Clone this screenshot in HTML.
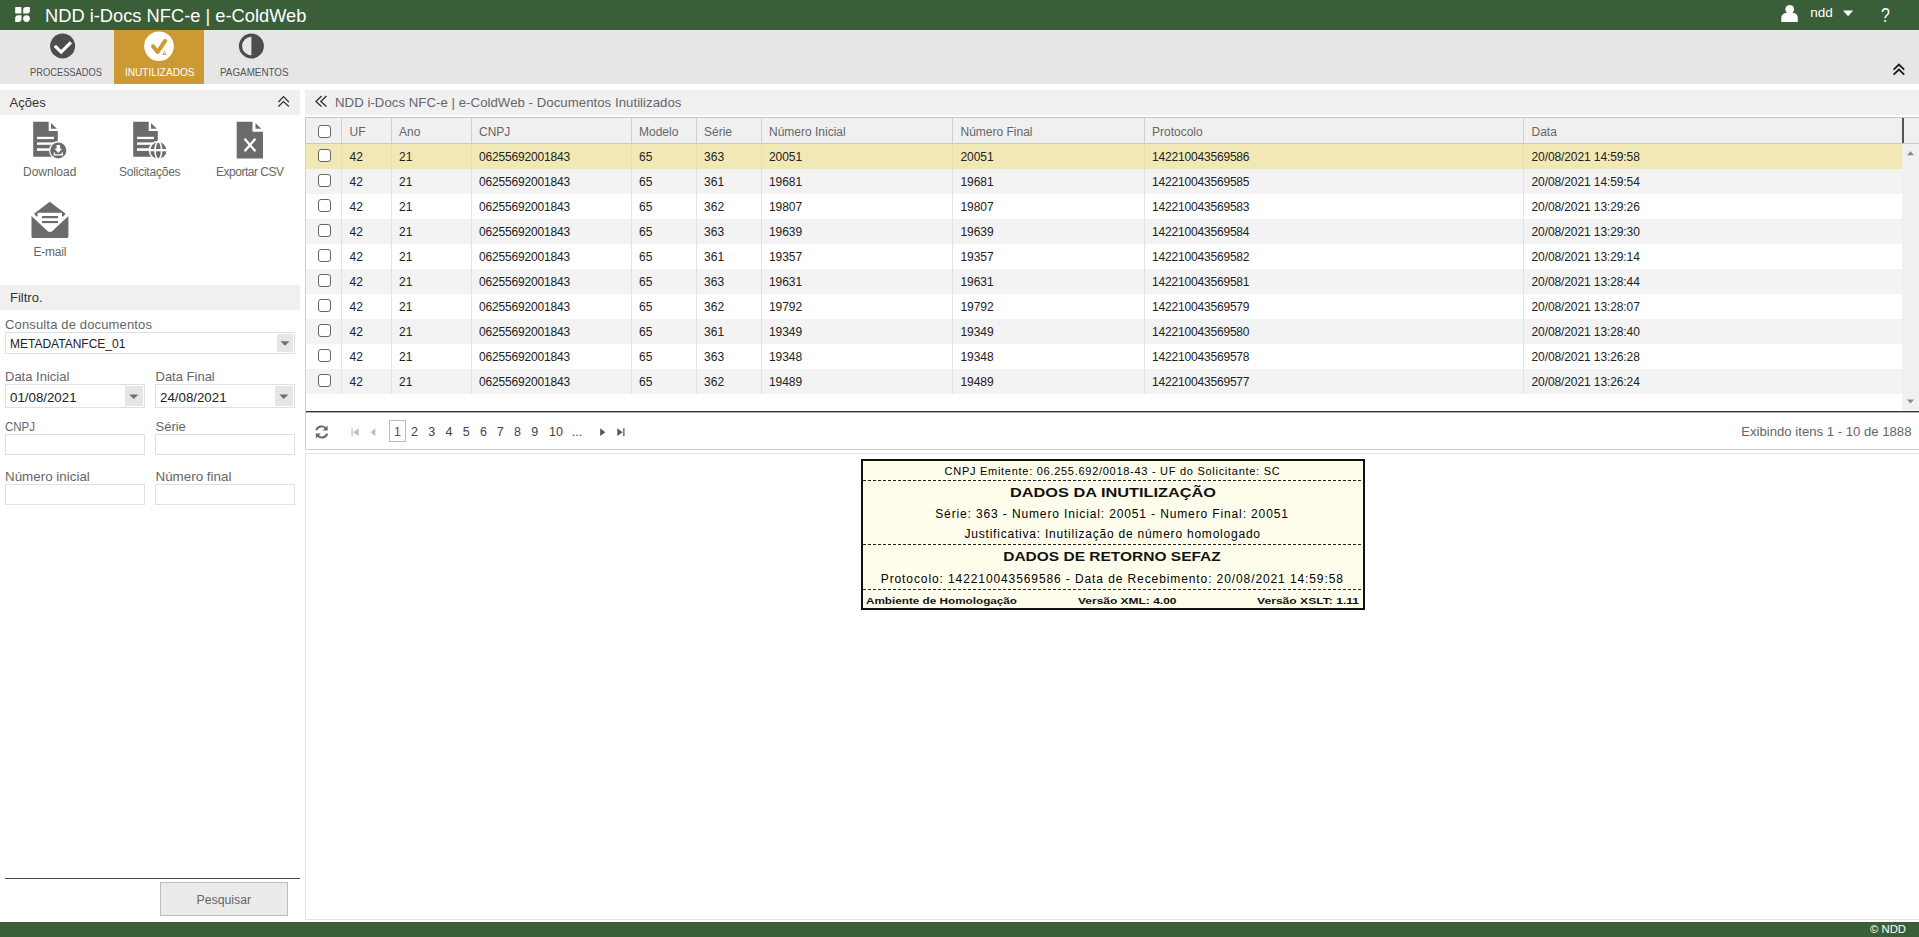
<!DOCTYPE html>
<html><head><meta charset="utf-8"><title>NDD i-Docs NFC-e | e-ColdWeb</title>
<style>
*{box-sizing:border-box;margin:0;padding:0}
html,body{width:1919px;height:937px;overflow:hidden;background:#fff;font-family:"Liberation Sans",sans-serif;color:#333}
.a{position:absolute}
.t{white-space:nowrap}
</style></head><body>
<div class="a" style="left:0px;top:0px;width:1919px;height:30px;background:#3a5e38"></div>
<svg class="a" style="left:14px;top:6px" width="18" height="18" viewBox="0 0 18 18"><g fill="#fff"><rect x="1.2" y="1" width="6.2" height="6.6" rx="0.6"/><path d="M9.2 7.6V3.6C9.2 2.2 10.4 1 11.8 1H15.9V5C15.9 6.4 14.7 7.6 13.3 7.6Z"/><path d="M1.2 15.9V12C1.2 10.5 2.4 9.3 3.9 9.3H7.5V13.3C7.5 14.7 6.3 15.9 4.9 15.9Z"/><circle cx="12.5" cy="12.6" r="3.4"/></g></svg>
<div class="a t" style="left:45.00px;top:6.51px;font-size:18.3px;line-height:18.3px;color:#fff;">NDD i-Docs NFC-e | e-ColdWeb</div>
<svg class="a" style="left:1780px;top:3px" width="20" height="20" viewBox="0 0 20 20"><g fill="#fff"><circle cx="9.7" cy="6.3" r="4.35"/><path d="M1.3 18.9V15.2C1.3 12.4 3.3 10.1 6 10.1H13.4C16.1 10.1 17.8 12.4 17.8 15.2V18.9Z"/></g></svg>
<div class="a t" style="left:1810.30px;top:5.57px;font-size:13.5px;line-height:13.5px;color:#fff;">ndd</div>
<svg class="a" style="left:1842px;top:10px" width="12" height="7" viewBox="0 0 12 7"><path d="M1 0.6H11.2L6.1 6.3Z" fill="#fff"/></svg>
<div class="a t" style="left:1880.70px;top:4.12px;font-size:21px;line-height:21px;color:#fff;transform:scaleX(0.7529);transform-origin:left;">?</div>
<div class="a" style="left:0px;top:30px;width:1919px;height:54px;background:#e6e6e6"></div>
<div class="a" style="left:114px;top:30px;width:90px;height:54px;background:#cc9933"></div>
<svg class="a" style="left:48px;top:31px" width="30" height="30" viewBox="0 0 30 30"><circle cx="14.6" cy="15" r="12.5" fill="#4d4d4d"/><path d="M6.8 14.8L13.2 21.1L22.9 11.4" fill="none" stroke="#fff" stroke-width="3.2"/></svg>
<div class="a t" style="left:29.60px;top:66.87px;font-size:11.5px;line-height:11.5px;color:#555;transform:scaleX(0.8106);transform-origin:left;">PROCESSADOS</div>
<svg class="a" style="left:142px;top:29px" width="34" height="34" viewBox="0 0 34 34"><circle cx="17" cy="17.2" r="14.8" fill="#fff"/><path d="M11 17.3L15.6 23L23.2 11.9" fill="none" stroke="#cc9933" stroke-width="4" stroke-linecap="round" stroke-linejoin="round"/><path d="M19.4 26.6L22.5 20.6L25.6 26.6Z" fill="#fff"/><path d="M20.3 26L22.5 21.8L24.7 26Z" fill="#cc9933"/><rect x="22.1" y="23" width="0.8" height="1.7" fill="#fff"/><rect x="22.1" y="25" width="0.8" height="0.6" fill="#fff"/></svg>
<div class="a t" style="left:124.60px;top:66.87px;font-size:11.5px;line-height:11.5px;color:#fff;transform:scaleX(0.8771);transform-origin:left;">INUTILIZADOS</div>
<svg class="a" style="left:237px;top:31px" width="30" height="30" viewBox="0 0 30 30"><circle cx="14.4" cy="15" r="10.9" fill="none" stroke="#4d4d4d" stroke-width="3.2"/><path d="M14.4 4.1A10.9 10.9 0 0 1 14.4 25.9Z" fill="#4d4d4d"/></svg>
<div class="a t" style="left:219.70px;top:66.87px;font-size:11.5px;line-height:11.5px;color:#555;transform:scaleX(0.8565);transform-origin:left;">PAGAMENTOS</div>
<svg class="a" style="left:1890px;top:60px" width="18" height="18" viewBox="0 0 18 18"><g fill="none" stroke="#1a1a1a" stroke-width="1.8"><path d="M3.6 9.6L8.9 4.6L14.2 9.6"/><path d="M3.6 14.6L8.9 9.6L14.2 14.6"/></g></svg>
<div class="a" style="left:0px;top:90px;width:300px;height:25px;background:#f0f0f0"></div>
<div class="a t" style="left:9.50px;top:96.00px;font-size:13px;line-height:13px;color:#333;">Ações</div>
<svg class="a" style="left:272px;top:92px" width="24" height="20" viewBox="0 0 24 20"><g fill="none" stroke="#333" stroke-width="1.35"><path d="M6.4 10L11.5 4.6L16.9 10"/><path d="M6.4 14.6L11.5 9.6L16.9 14.6"/></g></svg>
<svg class="a" style="left:28px;top:118px" width="44" height="44" viewBox="0 0 44 44"><path d="M5.2 3.8H20.7V13H29.8V38.7H5.2Z" fill="#6b6b6b"/><path d="M23 4.9L28.9 10.8H23Z" fill="#6b6b6b"/><g fill="#fff"><rect x="9" y="18.8" width="17" height="2.3"/><rect x="9" y="24.4" width="17" height="2.4"/><rect x="9" y="30.3" width="17" height="2.6"/></g><circle cx="30.3" cy="32.4" r="9.3" fill="#fff"/><circle cx="30.3" cy="32.4" r="8" fill="#6b6b6b"/><path d="M28.5 27H32.1V30.8H34.1L30.3 34.9L26.5 30.8H28.5Z" fill="#fff"/><path d="M26.4 34.4V36.9H34.3V34.4" fill="none" stroke="#fff" stroke-width="1.4"/></svg>
<div class="a t" style="left:23.00px;top:166.04px;font-size:12px;line-height:12px;color:#666;">Download</div>
<svg class="a" style="left:128px;top:118px" width="44" height="44" viewBox="0 0 44 44"><path d="M5.2 3.8H20.7V13H29.8V38.7H5.2Z" fill="#6b6b6b"/><path d="M23 4.9L28.9 10.8H23Z" fill="#6b6b6b"/><g fill="#fff"><rect x="9" y="18.8" width="17" height="2.3"/><rect x="9" y="24.4" width="17" height="2.4"/><rect x="9" y="30.3" width="17" height="2.6"/></g><circle cx="30.3" cy="32.4" r="9.6" fill="#fff"/><circle cx="30.3" cy="32.4" r="8.1" fill="#6b6b6b"/><ellipse cx="30.3" cy="32.4" rx="3.3" ry="8.6" fill="none" stroke="#fff" stroke-width="1.6"/><rect x="21" y="31" width="19" height="2.3" fill="#fff"/></svg>
<div class="a t" style="left:119.00px;top:166.04px;font-size:12px;line-height:12px;color:#666;letter-spacing:-0.220px;">Solicitações</div>
<svg class="a" style="left:228px;top:118px" width="44" height="44" viewBox="0 0 44 44"><path d="M8.7 3.8H24.5V13.8H35V40.6H8.7Z" fill="#6b6b6b"/><path d="M27.5 5L33.3 10.8H27.5Z" fill="#6b6b6b"/><path d="M16.6 20.8L27.4 33.2M27.4 20.8L16.6 33.2" stroke="#fff" stroke-width="2.3" fill="none"/></svg>
<div class="a t" style="left:216.00px;top:166.04px;font-size:12px;line-height:12px;color:#666;letter-spacing:-0.480px;">Exportar CSV</div>
<svg class="a" style="left:28px;top:198px" width="44" height="44" viewBox="0 0 44 44"><path d="M6 15.8L21.8 3.8L37.6 15.8L35.3 18.6L8.4 18.6Z" fill="#6b6b6b"/><rect x="9.6" y="14.8" width="24.4" height="19" fill="#fff"/><rect x="14" y="18" width="16" height="2.2" fill="#6b6b6b"/><rect x="14" y="23" width="16" height="2.1" fill="#6b6b6b"/><path d="M3.5 18L20.3 33.8H23.6L40.4 18V38.2Q40.4 40.1 38.5 40.1H5.4Q3.5 40.1 3.5 38.2Z" fill="#6b6b6b"/></svg>
<div class="a t" style="left:33.60px;top:245.64px;font-size:12px;line-height:12px;color:#666;letter-spacing:-0.250px;">E-mail</div>
<div class="a" style="left:0px;top:285px;width:300px;height:25px;background:#f0f0f0"></div>
<div class="a t" style="left:10.00px;top:290.80px;font-size:13px;line-height:13px;color:#333;">Filtro.</div>
<div class="a t" style="left:5.00px;top:317.70px;font-size:13px;line-height:13px;color:#666;letter-spacing:0.150px;">Consulta de documentos</div>
<div class="a" style="left:5px;top:332px;width:290px;height:22px;background:#fff;border:1px solid #e0e0e0"></div>
<div class="a" style="left:277px;top:334px;width:16px;height:18px;background:#e6e6e6"></div>
<svg class="a" style="left:277px;top:334px" width="16" height="18" viewBox="0 0 16 18"><path d="M3.5 7.3H12.5L8 11.8Z" fill="#707070"/></svg>
<div class="a t" style="left:10.00px;top:337.74px;font-size:12px;line-height:12px;color:#222;">METADATANFCE_01</div>
<div class="a t" style="left:5.00px;top:370.20px;font-size:13px;line-height:13px;color:#666;">Data Inicial</div>
<div class="a t" style="left:155.50px;top:370.20px;font-size:13px;line-height:13px;color:#666;">Data Final</div>
<div class="a" style="left:5px;top:384px;width:140px;height:24px;background:#fff;border:1px solid #e0e0e0"></div>
<div class="a" style="left:125px;top:386px;width:18px;height:20px;background:#e6e6e6"></div>
<svg class="a" style="left:125px;top:386px" width="18" height="20" viewBox="0 0 18 20"><path d="M4.2 8.5H13.4L8.8 13Z" fill="#707070"/></svg>
<div class="a" style="left:155px;top:384px;width:140px;height:24px;background:#fff;border:1px solid #e0e0e0"></div>
<div class="a" style="left:275px;top:386px;width:18px;height:20px;background:#e6e6e6"></div>
<svg class="a" style="left:275px;top:386px" width="18" height="20" viewBox="0 0 18 20"><path d="M4.2 8.5H13.4L8.8 13Z" fill="#707070"/></svg>
<div class="a t" style="left:10.00px;top:390.84px;font-size:13.3px;line-height:13.3px;color:#222;">01/08/2021</div>
<div class="a t" style="left:160.00px;top:390.84px;font-size:13.3px;line-height:13.3px;color:#222;">24/08/2021</div>
<div class="a t" style="left:5.00px;top:420.20px;font-size:13px;line-height:13px;color:#666;transform:scaleX(0.8836);transform-origin:left;">CNPJ</div>
<div class="a t" style="left:155.50px;top:420.20px;font-size:13px;line-height:13px;color:#666;">Série</div>
<div class="a" style="left:5px;top:434px;width:140px;height:21px;background:#fff;border:1px solid #e0e0e0"></div>
<div class="a" style="left:155px;top:434px;width:140px;height:21px;background:#fff;border:1px solid #e0e0e0"></div>
<div class="a t" style="left:5.00px;top:469.76px;font-size:13.4px;line-height:13.4px;color:#666;">Número inicial</div>
<div class="a t" style="left:155.50px;top:469.76px;font-size:13.4px;line-height:13.4px;color:#666;">Número final</div>
<div class="a" style="left:5px;top:484px;width:140px;height:21px;background:#fff;border:1px solid #e0e0e0"></div>
<div class="a" style="left:155px;top:484px;width:140px;height:21px;background:#fff;border:1px solid #e0e0e0"></div>
<div class="a" style="left:5px;top:878px;width:295px;height:1px;background:#4a4a4a"></div>
<div class="a" style="left:160px;top:882px;width:128px;height:34px;background:#ebebeb;border:1px solid #bdbdbd"></div>
<div class="a t" style="left:196.50px;top:893.79px;font-size:12.3px;line-height:12.3px;color:#666;">Pesquisar</div>
<div class="a" style="left:305px;top:90px;width:1614px;height:25px;background:#f0f0f0"></div>
<svg class="a" style="left:310px;top:92px" width="24" height="20" viewBox="0 0 24 20"><g fill="none" stroke="#333" stroke-width="1.35"><path d="M11.5 4L6 9.4L11.5 14.4"/><path d="M16.4 4L10.9 9.4L16.4 14.4"/></g></svg>
<div class="a t" style="left:335.00px;top:95.83px;font-size:13.2px;line-height:13.2px;color:#666;letter-spacing:0.047px;">NDD i-Docs NFC-e | e-ColdWeb - Documentos Inutilizados</div>
<div class="a" style="left:305px;top:117px;width:1614px;height:333px;border-left:1px solid #cfcfcf;border-bottom:1px solid #cfcfcf"></div>
<div class="a" style="left:305px;top:453px;width:1614px;height:467px;border-left:1px solid #e4e4e4;border-bottom:1px solid #e4e4e4;border-top:1px solid #e4e4e4"></div>
<div class="a" style="left:305px;top:117px;width:1614px;height:27px;background:#f0f0f0;border-top:1px solid #c8c8c8;border-bottom:1px solid #c8c8c8;border-left:1px solid #c8c8c8"></div>
<div class="a" style="left:341px;top:118px;width:1px;height:25px;background:#cfcfcf"></div>
<div class="a" style="left:391px;top:118px;width:1px;height:25px;background:#cfcfcf"></div>
<div class="a" style="left:471px;top:118px;width:1px;height:25px;background:#cfcfcf"></div>
<div class="a" style="left:631px;top:118px;width:1px;height:25px;background:#cfcfcf"></div>
<div class="a" style="left:696px;top:118px;width:1px;height:25px;background:#cfcfcf"></div>
<div class="a" style="left:761px;top:118px;width:1px;height:25px;background:#cfcfcf"></div>
<div class="a" style="left:952px;top:118px;width:1px;height:25px;background:#cfcfcf"></div>
<div class="a" style="left:1144px;top:118px;width:1px;height:25px;background:#cfcfcf"></div>
<div class="a" style="left:1523px;top:118px;width:1px;height:25px;background:#cfcfcf"></div>
<div class="a" style="left:1902px;top:118px;width:2px;height:25px;background:#555"></div>
<div class="a t" style="left:349.60px;top:125.64px;font-size:12px;line-height:12px;color:#666;">UF</div>
<div class="a t" style="left:399.00px;top:125.64px;font-size:12px;line-height:12px;color:#666;">Ano</div>
<div class="a t" style="left:479.00px;top:125.64px;font-size:12px;line-height:12px;color:#666;">CNPJ</div>
<div class="a t" style="left:639.00px;top:125.64px;font-size:12px;line-height:12px;color:#666;">Modelo</div>
<div class="a t" style="left:704.00px;top:125.64px;font-size:12px;line-height:12px;color:#666;">Série</div>
<div class="a t" style="left:769.00px;top:125.64px;font-size:12px;line-height:12px;color:#666;">Número Inicial</div>
<div class="a t" style="left:960.50px;top:125.64px;font-size:12px;line-height:12px;color:#666;">Número Final</div>
<div class="a t" style="left:1152.00px;top:125.64px;font-size:12px;line-height:12px;color:#666;">Protocolo</div>
<div class="a t" style="left:1531.50px;top:125.64px;font-size:12px;line-height:12px;color:#666;">Data</div>
<div class="a" style="left:318px;top:125px;width:13px;height:13px;background:#fff;border:1px solid #666;border-radius:3px"></div>
<div class="a" style="left:306px;top:144px;width:1596px;height:25px;background:#f2e8b5"></div>
<div class="a" style="left:341px;top:144px;width:1px;height:25px;background:#e6dcae"></div>
<div class="a" style="left:391px;top:144px;width:1px;height:25px;background:#e6dcae"></div>
<div class="a" style="left:471px;top:144px;width:1px;height:25px;background:#e6dcae"></div>
<div class="a" style="left:631px;top:144px;width:1px;height:25px;background:#e6dcae"></div>
<div class="a" style="left:696px;top:144px;width:1px;height:25px;background:#e6dcae"></div>
<div class="a" style="left:761px;top:144px;width:1px;height:25px;background:#e6dcae"></div>
<div class="a" style="left:952px;top:144px;width:1px;height:25px;background:#e6dcae"></div>
<div class="a" style="left:1144px;top:144px;width:1px;height:25px;background:#e6dcae"></div>
<div class="a" style="left:1523px;top:144px;width:1px;height:25px;background:#e6dcae"></div>
<div class="a" style="left:318px;top:149px;width:13px;height:13px;background:#fff;border:1px solid #666;border-radius:3px"></div>
<div class="a t" style="left:349.50px;top:151.24px;font-size:12px;line-height:12px;color:#222;letter-spacing:0.200px;">42</div>
<div class="a t" style="left:399.00px;top:151.24px;font-size:12px;line-height:12px;color:#222;letter-spacing:0.200px;">21</div>
<div class="a t" style="left:479.00px;top:151.24px;font-size:12px;line-height:12px;color:#222;letter-spacing:-0.180px;">06255692001843</div>
<div class="a t" style="left:639.00px;top:151.24px;font-size:12px;line-height:12px;color:#222;letter-spacing:0.200px;">65</div>
<div class="a t" style="left:704.00px;top:151.24px;font-size:12px;line-height:12px;color:#222;letter-spacing:0.053px;">363</div>
<div class="a t" style="left:769.00px;top:151.24px;font-size:12px;line-height:12px;color:#222;letter-spacing:-0.065px;">20051</div>
<div class="a t" style="left:960.50px;top:151.24px;font-size:12px;line-height:12px;color:#222;letter-spacing:-0.065px;">20051</div>
<div class="a t" style="left:1152.00px;top:151.24px;font-size:12px;line-height:12px;color:#222;letter-spacing:-0.184px;">142210043569586</div>
<div class="a t" style="left:1531.50px;top:151.24px;font-size:12px;line-height:12px;color:#222;letter-spacing:-0.099px;">20/08/2021 14:59:58</div>
<div class="a" style="left:306px;top:169px;width:1596px;height:25px;background:#f3f3f3"></div>
<div class="a" style="left:341px;top:169px;width:1px;height:25px;background:#e2e2e2"></div>
<div class="a" style="left:391px;top:169px;width:1px;height:25px;background:#e2e2e2"></div>
<div class="a" style="left:471px;top:169px;width:1px;height:25px;background:#e2e2e2"></div>
<div class="a" style="left:631px;top:169px;width:1px;height:25px;background:#e2e2e2"></div>
<div class="a" style="left:696px;top:169px;width:1px;height:25px;background:#e2e2e2"></div>
<div class="a" style="left:761px;top:169px;width:1px;height:25px;background:#e2e2e2"></div>
<div class="a" style="left:952px;top:169px;width:1px;height:25px;background:#e2e2e2"></div>
<div class="a" style="left:1144px;top:169px;width:1px;height:25px;background:#e2e2e2"></div>
<div class="a" style="left:1523px;top:169px;width:1px;height:25px;background:#e2e2e2"></div>
<div class="a" style="left:318px;top:174px;width:13px;height:13px;background:#fff;border:1px solid #666;border-radius:3px"></div>
<div class="a t" style="left:349.50px;top:176.24px;font-size:12px;line-height:12px;color:#222;letter-spacing:0.200px;">42</div>
<div class="a t" style="left:399.00px;top:176.24px;font-size:12px;line-height:12px;color:#222;letter-spacing:0.200px;">21</div>
<div class="a t" style="left:479.00px;top:176.24px;font-size:12px;line-height:12px;color:#222;letter-spacing:-0.180px;">06255692001843</div>
<div class="a t" style="left:639.00px;top:176.24px;font-size:12px;line-height:12px;color:#222;letter-spacing:0.200px;">65</div>
<div class="a t" style="left:704.00px;top:176.24px;font-size:12px;line-height:12px;color:#222;letter-spacing:0.053px;">361</div>
<div class="a t" style="left:769.00px;top:176.24px;font-size:12px;line-height:12px;color:#222;letter-spacing:-0.065px;">19681</div>
<div class="a t" style="left:960.50px;top:176.24px;font-size:12px;line-height:12px;color:#222;letter-spacing:-0.065px;">19681</div>
<div class="a t" style="left:1152.00px;top:176.24px;font-size:12px;line-height:12px;color:#222;letter-spacing:-0.184px;">142210043569585</div>
<div class="a t" style="left:1531.50px;top:176.24px;font-size:12px;line-height:12px;color:#222;letter-spacing:-0.099px;">20/08/2021 14:59:54</div>
<div class="a" style="left:306px;top:194px;width:1596px;height:25px;background:#ffffff"></div>
<div class="a" style="left:341px;top:194px;width:1px;height:25px;background:#e2e2e2"></div>
<div class="a" style="left:391px;top:194px;width:1px;height:25px;background:#e2e2e2"></div>
<div class="a" style="left:471px;top:194px;width:1px;height:25px;background:#e2e2e2"></div>
<div class="a" style="left:631px;top:194px;width:1px;height:25px;background:#e2e2e2"></div>
<div class="a" style="left:696px;top:194px;width:1px;height:25px;background:#e2e2e2"></div>
<div class="a" style="left:761px;top:194px;width:1px;height:25px;background:#e2e2e2"></div>
<div class="a" style="left:952px;top:194px;width:1px;height:25px;background:#e2e2e2"></div>
<div class="a" style="left:1144px;top:194px;width:1px;height:25px;background:#e2e2e2"></div>
<div class="a" style="left:1523px;top:194px;width:1px;height:25px;background:#e2e2e2"></div>
<div class="a" style="left:318px;top:199px;width:13px;height:13px;background:#fff;border:1px solid #666;border-radius:3px"></div>
<div class="a t" style="left:349.50px;top:201.24px;font-size:12px;line-height:12px;color:#222;letter-spacing:0.200px;">42</div>
<div class="a t" style="left:399.00px;top:201.24px;font-size:12px;line-height:12px;color:#222;letter-spacing:0.200px;">21</div>
<div class="a t" style="left:479.00px;top:201.24px;font-size:12px;line-height:12px;color:#222;letter-spacing:-0.180px;">06255692001843</div>
<div class="a t" style="left:639.00px;top:201.24px;font-size:12px;line-height:12px;color:#222;letter-spacing:0.200px;">65</div>
<div class="a t" style="left:704.00px;top:201.24px;font-size:12px;line-height:12px;color:#222;letter-spacing:0.053px;">362</div>
<div class="a t" style="left:769.00px;top:201.24px;font-size:12px;line-height:12px;color:#222;letter-spacing:-0.065px;">19807</div>
<div class="a t" style="left:960.50px;top:201.24px;font-size:12px;line-height:12px;color:#222;letter-spacing:-0.065px;">19807</div>
<div class="a t" style="left:1152.00px;top:201.24px;font-size:12px;line-height:12px;color:#222;letter-spacing:-0.184px;">142210043569583</div>
<div class="a t" style="left:1531.50px;top:201.24px;font-size:12px;line-height:12px;color:#222;letter-spacing:-0.099px;">20/08/2021 13:29:26</div>
<div class="a" style="left:306px;top:219px;width:1596px;height:25px;background:#f3f3f3"></div>
<div class="a" style="left:341px;top:219px;width:1px;height:25px;background:#e2e2e2"></div>
<div class="a" style="left:391px;top:219px;width:1px;height:25px;background:#e2e2e2"></div>
<div class="a" style="left:471px;top:219px;width:1px;height:25px;background:#e2e2e2"></div>
<div class="a" style="left:631px;top:219px;width:1px;height:25px;background:#e2e2e2"></div>
<div class="a" style="left:696px;top:219px;width:1px;height:25px;background:#e2e2e2"></div>
<div class="a" style="left:761px;top:219px;width:1px;height:25px;background:#e2e2e2"></div>
<div class="a" style="left:952px;top:219px;width:1px;height:25px;background:#e2e2e2"></div>
<div class="a" style="left:1144px;top:219px;width:1px;height:25px;background:#e2e2e2"></div>
<div class="a" style="left:1523px;top:219px;width:1px;height:25px;background:#e2e2e2"></div>
<div class="a" style="left:318px;top:224px;width:13px;height:13px;background:#fff;border:1px solid #666;border-radius:3px"></div>
<div class="a t" style="left:349.50px;top:226.24px;font-size:12px;line-height:12px;color:#222;letter-spacing:0.200px;">42</div>
<div class="a t" style="left:399.00px;top:226.24px;font-size:12px;line-height:12px;color:#222;letter-spacing:0.200px;">21</div>
<div class="a t" style="left:479.00px;top:226.24px;font-size:12px;line-height:12px;color:#222;letter-spacing:-0.180px;">06255692001843</div>
<div class="a t" style="left:639.00px;top:226.24px;font-size:12px;line-height:12px;color:#222;letter-spacing:0.200px;">65</div>
<div class="a t" style="left:704.00px;top:226.24px;font-size:12px;line-height:12px;color:#222;letter-spacing:0.053px;">363</div>
<div class="a t" style="left:769.00px;top:226.24px;font-size:12px;line-height:12px;color:#222;letter-spacing:-0.065px;">19639</div>
<div class="a t" style="left:960.50px;top:226.24px;font-size:12px;line-height:12px;color:#222;letter-spacing:-0.065px;">19639</div>
<div class="a t" style="left:1152.00px;top:226.24px;font-size:12px;line-height:12px;color:#222;letter-spacing:-0.184px;">142210043569584</div>
<div class="a t" style="left:1531.50px;top:226.24px;font-size:12px;line-height:12px;color:#222;letter-spacing:-0.099px;">20/08/2021 13:29:30</div>
<div class="a" style="left:306px;top:244px;width:1596px;height:25px;background:#ffffff"></div>
<div class="a" style="left:341px;top:244px;width:1px;height:25px;background:#e2e2e2"></div>
<div class="a" style="left:391px;top:244px;width:1px;height:25px;background:#e2e2e2"></div>
<div class="a" style="left:471px;top:244px;width:1px;height:25px;background:#e2e2e2"></div>
<div class="a" style="left:631px;top:244px;width:1px;height:25px;background:#e2e2e2"></div>
<div class="a" style="left:696px;top:244px;width:1px;height:25px;background:#e2e2e2"></div>
<div class="a" style="left:761px;top:244px;width:1px;height:25px;background:#e2e2e2"></div>
<div class="a" style="left:952px;top:244px;width:1px;height:25px;background:#e2e2e2"></div>
<div class="a" style="left:1144px;top:244px;width:1px;height:25px;background:#e2e2e2"></div>
<div class="a" style="left:1523px;top:244px;width:1px;height:25px;background:#e2e2e2"></div>
<div class="a" style="left:318px;top:249px;width:13px;height:13px;background:#fff;border:1px solid #666;border-radius:3px"></div>
<div class="a t" style="left:349.50px;top:251.24px;font-size:12px;line-height:12px;color:#222;letter-spacing:0.200px;">42</div>
<div class="a t" style="left:399.00px;top:251.24px;font-size:12px;line-height:12px;color:#222;letter-spacing:0.200px;">21</div>
<div class="a t" style="left:479.00px;top:251.24px;font-size:12px;line-height:12px;color:#222;letter-spacing:-0.180px;">06255692001843</div>
<div class="a t" style="left:639.00px;top:251.24px;font-size:12px;line-height:12px;color:#222;letter-spacing:0.200px;">65</div>
<div class="a t" style="left:704.00px;top:251.24px;font-size:12px;line-height:12px;color:#222;letter-spacing:0.053px;">361</div>
<div class="a t" style="left:769.00px;top:251.24px;font-size:12px;line-height:12px;color:#222;letter-spacing:-0.065px;">19357</div>
<div class="a t" style="left:960.50px;top:251.24px;font-size:12px;line-height:12px;color:#222;letter-spacing:-0.065px;">19357</div>
<div class="a t" style="left:1152.00px;top:251.24px;font-size:12px;line-height:12px;color:#222;letter-spacing:-0.184px;">142210043569582</div>
<div class="a t" style="left:1531.50px;top:251.24px;font-size:12px;line-height:12px;color:#222;letter-spacing:-0.099px;">20/08/2021 13:29:14</div>
<div class="a" style="left:306px;top:269px;width:1596px;height:25px;background:#f3f3f3"></div>
<div class="a" style="left:341px;top:269px;width:1px;height:25px;background:#e2e2e2"></div>
<div class="a" style="left:391px;top:269px;width:1px;height:25px;background:#e2e2e2"></div>
<div class="a" style="left:471px;top:269px;width:1px;height:25px;background:#e2e2e2"></div>
<div class="a" style="left:631px;top:269px;width:1px;height:25px;background:#e2e2e2"></div>
<div class="a" style="left:696px;top:269px;width:1px;height:25px;background:#e2e2e2"></div>
<div class="a" style="left:761px;top:269px;width:1px;height:25px;background:#e2e2e2"></div>
<div class="a" style="left:952px;top:269px;width:1px;height:25px;background:#e2e2e2"></div>
<div class="a" style="left:1144px;top:269px;width:1px;height:25px;background:#e2e2e2"></div>
<div class="a" style="left:1523px;top:269px;width:1px;height:25px;background:#e2e2e2"></div>
<div class="a" style="left:318px;top:274px;width:13px;height:13px;background:#fff;border:1px solid #666;border-radius:3px"></div>
<div class="a t" style="left:349.50px;top:276.24px;font-size:12px;line-height:12px;color:#222;letter-spacing:0.200px;">42</div>
<div class="a t" style="left:399.00px;top:276.24px;font-size:12px;line-height:12px;color:#222;letter-spacing:0.200px;">21</div>
<div class="a t" style="left:479.00px;top:276.24px;font-size:12px;line-height:12px;color:#222;letter-spacing:-0.180px;">06255692001843</div>
<div class="a t" style="left:639.00px;top:276.24px;font-size:12px;line-height:12px;color:#222;letter-spacing:0.200px;">65</div>
<div class="a t" style="left:704.00px;top:276.24px;font-size:12px;line-height:12px;color:#222;letter-spacing:0.053px;">363</div>
<div class="a t" style="left:769.00px;top:276.24px;font-size:12px;line-height:12px;color:#222;letter-spacing:-0.065px;">19631</div>
<div class="a t" style="left:960.50px;top:276.24px;font-size:12px;line-height:12px;color:#222;letter-spacing:-0.065px;">19631</div>
<div class="a t" style="left:1152.00px;top:276.24px;font-size:12px;line-height:12px;color:#222;letter-spacing:-0.184px;">142210043569581</div>
<div class="a t" style="left:1531.50px;top:276.24px;font-size:12px;line-height:12px;color:#222;letter-spacing:-0.099px;">20/08/2021 13:28:44</div>
<div class="a" style="left:306px;top:294px;width:1596px;height:25px;background:#ffffff"></div>
<div class="a" style="left:341px;top:294px;width:1px;height:25px;background:#e2e2e2"></div>
<div class="a" style="left:391px;top:294px;width:1px;height:25px;background:#e2e2e2"></div>
<div class="a" style="left:471px;top:294px;width:1px;height:25px;background:#e2e2e2"></div>
<div class="a" style="left:631px;top:294px;width:1px;height:25px;background:#e2e2e2"></div>
<div class="a" style="left:696px;top:294px;width:1px;height:25px;background:#e2e2e2"></div>
<div class="a" style="left:761px;top:294px;width:1px;height:25px;background:#e2e2e2"></div>
<div class="a" style="left:952px;top:294px;width:1px;height:25px;background:#e2e2e2"></div>
<div class="a" style="left:1144px;top:294px;width:1px;height:25px;background:#e2e2e2"></div>
<div class="a" style="left:1523px;top:294px;width:1px;height:25px;background:#e2e2e2"></div>
<div class="a" style="left:318px;top:299px;width:13px;height:13px;background:#fff;border:1px solid #666;border-radius:3px"></div>
<div class="a t" style="left:349.50px;top:301.24px;font-size:12px;line-height:12px;color:#222;letter-spacing:0.200px;">42</div>
<div class="a t" style="left:399.00px;top:301.24px;font-size:12px;line-height:12px;color:#222;letter-spacing:0.200px;">21</div>
<div class="a t" style="left:479.00px;top:301.24px;font-size:12px;line-height:12px;color:#222;letter-spacing:-0.180px;">06255692001843</div>
<div class="a t" style="left:639.00px;top:301.24px;font-size:12px;line-height:12px;color:#222;letter-spacing:0.200px;">65</div>
<div class="a t" style="left:704.00px;top:301.24px;font-size:12px;line-height:12px;color:#222;letter-spacing:0.053px;">362</div>
<div class="a t" style="left:769.00px;top:301.24px;font-size:12px;line-height:12px;color:#222;letter-spacing:-0.065px;">19792</div>
<div class="a t" style="left:960.50px;top:301.24px;font-size:12px;line-height:12px;color:#222;letter-spacing:-0.065px;">19792</div>
<div class="a t" style="left:1152.00px;top:301.24px;font-size:12px;line-height:12px;color:#222;letter-spacing:-0.184px;">142210043569579</div>
<div class="a t" style="left:1531.50px;top:301.24px;font-size:12px;line-height:12px;color:#222;letter-spacing:-0.099px;">20/08/2021 13:28:07</div>
<div class="a" style="left:306px;top:319px;width:1596px;height:25px;background:#f3f3f3"></div>
<div class="a" style="left:341px;top:319px;width:1px;height:25px;background:#e2e2e2"></div>
<div class="a" style="left:391px;top:319px;width:1px;height:25px;background:#e2e2e2"></div>
<div class="a" style="left:471px;top:319px;width:1px;height:25px;background:#e2e2e2"></div>
<div class="a" style="left:631px;top:319px;width:1px;height:25px;background:#e2e2e2"></div>
<div class="a" style="left:696px;top:319px;width:1px;height:25px;background:#e2e2e2"></div>
<div class="a" style="left:761px;top:319px;width:1px;height:25px;background:#e2e2e2"></div>
<div class="a" style="left:952px;top:319px;width:1px;height:25px;background:#e2e2e2"></div>
<div class="a" style="left:1144px;top:319px;width:1px;height:25px;background:#e2e2e2"></div>
<div class="a" style="left:1523px;top:319px;width:1px;height:25px;background:#e2e2e2"></div>
<div class="a" style="left:318px;top:324px;width:13px;height:13px;background:#fff;border:1px solid #666;border-radius:3px"></div>
<div class="a t" style="left:349.50px;top:326.24px;font-size:12px;line-height:12px;color:#222;letter-spacing:0.200px;">42</div>
<div class="a t" style="left:399.00px;top:326.24px;font-size:12px;line-height:12px;color:#222;letter-spacing:0.200px;">21</div>
<div class="a t" style="left:479.00px;top:326.24px;font-size:12px;line-height:12px;color:#222;letter-spacing:-0.180px;">06255692001843</div>
<div class="a t" style="left:639.00px;top:326.24px;font-size:12px;line-height:12px;color:#222;letter-spacing:0.200px;">65</div>
<div class="a t" style="left:704.00px;top:326.24px;font-size:12px;line-height:12px;color:#222;letter-spacing:0.053px;">361</div>
<div class="a t" style="left:769.00px;top:326.24px;font-size:12px;line-height:12px;color:#222;letter-spacing:-0.065px;">19349</div>
<div class="a t" style="left:960.50px;top:326.24px;font-size:12px;line-height:12px;color:#222;letter-spacing:-0.065px;">19349</div>
<div class="a t" style="left:1152.00px;top:326.24px;font-size:12px;line-height:12px;color:#222;letter-spacing:-0.184px;">142210043569580</div>
<div class="a t" style="left:1531.50px;top:326.24px;font-size:12px;line-height:12px;color:#222;letter-spacing:-0.099px;">20/08/2021 13:28:40</div>
<div class="a" style="left:306px;top:344px;width:1596px;height:25px;background:#ffffff"></div>
<div class="a" style="left:341px;top:344px;width:1px;height:25px;background:#e2e2e2"></div>
<div class="a" style="left:391px;top:344px;width:1px;height:25px;background:#e2e2e2"></div>
<div class="a" style="left:471px;top:344px;width:1px;height:25px;background:#e2e2e2"></div>
<div class="a" style="left:631px;top:344px;width:1px;height:25px;background:#e2e2e2"></div>
<div class="a" style="left:696px;top:344px;width:1px;height:25px;background:#e2e2e2"></div>
<div class="a" style="left:761px;top:344px;width:1px;height:25px;background:#e2e2e2"></div>
<div class="a" style="left:952px;top:344px;width:1px;height:25px;background:#e2e2e2"></div>
<div class="a" style="left:1144px;top:344px;width:1px;height:25px;background:#e2e2e2"></div>
<div class="a" style="left:1523px;top:344px;width:1px;height:25px;background:#e2e2e2"></div>
<div class="a" style="left:318px;top:349px;width:13px;height:13px;background:#fff;border:1px solid #666;border-radius:3px"></div>
<div class="a t" style="left:349.50px;top:351.24px;font-size:12px;line-height:12px;color:#222;letter-spacing:0.200px;">42</div>
<div class="a t" style="left:399.00px;top:351.24px;font-size:12px;line-height:12px;color:#222;letter-spacing:0.200px;">21</div>
<div class="a t" style="left:479.00px;top:351.24px;font-size:12px;line-height:12px;color:#222;letter-spacing:-0.180px;">06255692001843</div>
<div class="a t" style="left:639.00px;top:351.24px;font-size:12px;line-height:12px;color:#222;letter-spacing:0.200px;">65</div>
<div class="a t" style="left:704.00px;top:351.24px;font-size:12px;line-height:12px;color:#222;letter-spacing:0.053px;">363</div>
<div class="a t" style="left:769.00px;top:351.24px;font-size:12px;line-height:12px;color:#222;letter-spacing:-0.065px;">19348</div>
<div class="a t" style="left:960.50px;top:351.24px;font-size:12px;line-height:12px;color:#222;letter-spacing:-0.065px;">19348</div>
<div class="a t" style="left:1152.00px;top:351.24px;font-size:12px;line-height:12px;color:#222;letter-spacing:-0.184px;">142210043569578</div>
<div class="a t" style="left:1531.50px;top:351.24px;font-size:12px;line-height:12px;color:#222;letter-spacing:-0.099px;">20/08/2021 13:26:28</div>
<div class="a" style="left:306px;top:369px;width:1596px;height:25px;background:#f3f3f3"></div>
<div class="a" style="left:341px;top:369px;width:1px;height:25px;background:#e2e2e2"></div>
<div class="a" style="left:391px;top:369px;width:1px;height:25px;background:#e2e2e2"></div>
<div class="a" style="left:471px;top:369px;width:1px;height:25px;background:#e2e2e2"></div>
<div class="a" style="left:631px;top:369px;width:1px;height:25px;background:#e2e2e2"></div>
<div class="a" style="left:696px;top:369px;width:1px;height:25px;background:#e2e2e2"></div>
<div class="a" style="left:761px;top:369px;width:1px;height:25px;background:#e2e2e2"></div>
<div class="a" style="left:952px;top:369px;width:1px;height:25px;background:#e2e2e2"></div>
<div class="a" style="left:1144px;top:369px;width:1px;height:25px;background:#e2e2e2"></div>
<div class="a" style="left:1523px;top:369px;width:1px;height:25px;background:#e2e2e2"></div>
<div class="a" style="left:318px;top:374px;width:13px;height:13px;background:#fff;border:1px solid #666;border-radius:3px"></div>
<div class="a t" style="left:349.50px;top:376.24px;font-size:12px;line-height:12px;color:#222;letter-spacing:0.200px;">42</div>
<div class="a t" style="left:399.00px;top:376.24px;font-size:12px;line-height:12px;color:#222;letter-spacing:0.200px;">21</div>
<div class="a t" style="left:479.00px;top:376.24px;font-size:12px;line-height:12px;color:#222;letter-spacing:-0.180px;">06255692001843</div>
<div class="a t" style="left:639.00px;top:376.24px;font-size:12px;line-height:12px;color:#222;letter-spacing:0.200px;">65</div>
<div class="a t" style="left:704.00px;top:376.24px;font-size:12px;line-height:12px;color:#222;letter-spacing:0.053px;">362</div>
<div class="a t" style="left:769.00px;top:376.24px;font-size:12px;line-height:12px;color:#222;letter-spacing:-0.065px;">19489</div>
<div class="a t" style="left:960.50px;top:376.24px;font-size:12px;line-height:12px;color:#222;letter-spacing:-0.065px;">19489</div>
<div class="a t" style="left:1152.00px;top:376.24px;font-size:12px;line-height:12px;color:#222;letter-spacing:-0.184px;">142210043569577</div>
<div class="a t" style="left:1531.50px;top:376.24px;font-size:12px;line-height:12px;color:#222;letter-spacing:-0.099px;">20/08/2021 13:26:24</div>
<div class="a" style="left:1902px;top:144px;width:17px;height:266px;background:#f0f0f0"></div>
<svg class="a" style="left:1902px;top:144px" width="17" height="266" viewBox="0 0 17 266"><path d="M5 11.2L8.5 7.2L12 11.2Z" fill="#888"/><path d="M5 255.6L8.5 259.6L12 255.6Z" fill="#888"/></svg>
<div class="a" style="left:306px;top:411px;width:1613px;height:1px;background:#333"></div>
<div class="a" style="left:306px;top:412px;width:1613px;height:1px;background:#b0b0b0"></div>
<svg class="a" style="left:312px;top:422px" width="20" height="20" viewBox="0 0 20 20"><g fill="none" stroke="#666" stroke-width="1.9"><path d="M4.2 8.2A5.6 5.6 0 0 1 14.2 7"/><path d="M15.3 11.6A5.6 5.6 0 0 1 5.3 13"/></g><path d="M15.6 3.6V8.6H10.6Z" fill="#666"/><path d="M3.8 16.4V11.4H8.8Z" fill="#666"/></svg>
<svg class="a" style="left:350px;top:426px" width="30" height="12" viewBox="0 0 30 12"><g fill="#bdbdbd"><rect x="1.5" y="2.3" width="1.2" height="7.8"/><path d="M8.7 2.3V10.1L3.3 6.2Z"/><path d="M25.3 2.3V10.1L20.6 6.2Z"/></g></svg>
<div class="a" style="left:389px;top:420px;width:17px;height:22px;border:1px solid #bbb;background:#fff"></div>
<div class="a t" style="left:-2.50px;width:800px;text-align:center;top:425.52px;font-size:12.5px;line-height:12.5px;color:#555;">1</div>
<div class="a t" style="left:14.50px;width:800px;text-align:center;top:425.52px;font-size:12.5px;line-height:12.5px;color:#444;">2</div>
<div class="a t" style="left:31.70px;width:800px;text-align:center;top:425.52px;font-size:12.5px;line-height:12.5px;color:#444;">3</div>
<div class="a t" style="left:48.90px;width:800px;text-align:center;top:425.52px;font-size:12.5px;line-height:12.5px;color:#444;">4</div>
<div class="a t" style="left:66.30px;width:800px;text-align:center;top:425.52px;font-size:12.5px;line-height:12.5px;color:#444;">5</div>
<div class="a t" style="left:83.50px;width:800px;text-align:center;top:425.52px;font-size:12.5px;line-height:12.5px;color:#444;">6</div>
<div class="a t" style="left:100.30px;width:800px;text-align:center;top:425.52px;font-size:12.5px;line-height:12.5px;color:#444;">7</div>
<div class="a t" style="left:117.60px;width:800px;text-align:center;top:425.52px;font-size:12.5px;line-height:12.5px;color:#444;">8</div>
<div class="a t" style="left:134.70px;width:800px;text-align:center;top:425.52px;font-size:12.5px;line-height:12.5px;color:#444;">9</div>
<div class="a t" style="left:156.00px;width:800px;text-align:center;top:425.52px;font-size:12.5px;line-height:12.5px;color:#444;">10</div>
<div class="a t" style="left:177.00px;width:800px;text-align:center;top:425.52px;font-size:12.5px;line-height:12.5px;color:#444;">...</div>
<svg class="a" style="left:596px;top:426px" width="32" height="12" viewBox="0 0 32 12"><g fill="#555"><path d="M4.2 2.3V10.1L9.3 6.2Z"/><path d="M21.3 2.3V10.1L26.6 6.2Z"/><rect x="27.2" y="2.3" width="1.3" height="7.8"/></g></svg>
<div class="a t" style="right:7.50px;top:424.97px;font-size:13.15px;line-height:13.15px;color:#666;">Exibindo itens 1 - 10 de 1888</div>
<div class="a" style="left:861px;top:459px;width:504px;height:151px;background:#fffdeb;border:2px solid #111"></div>
<div class="a" style="left:863px;top:480px;width:500px;height:1px;background-image:repeating-linear-gradient(90deg,#222 0 3px,transparent 3px 5px)"></div>
<div class="a" style="left:863px;top:544px;width:500px;height:1px;background-image:repeating-linear-gradient(90deg,#222 0 3px,transparent 3px 5px)"></div>
<div class="a" style="left:863px;top:589px;width:500px;height:1px;background-image:repeating-linear-gradient(90deg,#222 0 3px,transparent 3px 5px)"></div>
<div class="a t" style="left:712.50px;width:800px;text-align:center;top:465.69px;font-size:11px;line-height:11px;color:#000;letter-spacing:0.720px;">CNPJ Emitente: 06.255.692/0018-43 - UF do Solicitante: SC</div>
<div class="a t" style="left:712.70px;width:800px;text-align:center;top:486.09px;font-size:13.6px;line-height:13.6px;color:#111;font-weight:700;transform:scaleX(1.1999);transform-origin:center;">DADOS DA INUTILIZAÇÃO</div>
<div class="a t" style="left:712.00px;width:800px;text-align:center;top:508.44px;font-size:12px;line-height:12px;color:#000;letter-spacing:0.870px;">Série: 363 - Numero Inicial: 20051 - Numero Final: 20051</div>
<div class="a t" style="left:712.70px;width:800px;text-align:center;top:527.64px;font-size:12px;line-height:12px;color:#000;letter-spacing:0.780px;">Justificativa: Inutilização de número homologado</div>
<div class="a t" style="left:712.40px;width:800px;text-align:center;top:550.49px;font-size:13.6px;line-height:13.6px;color:#111;font-weight:700;transform:scaleX(1.1397);transform-origin:center;">DADOS DE RETORNO SEFAZ</div>
<div class="a t" style="left:712.30px;width:800px;text-align:center;top:572.84px;font-size:12px;line-height:12px;color:#000;letter-spacing:0.900px;">Protocolo: 142210043569586 - Data de Recebimento: 20/08/2021 14:59:58</div>
<div class="a t" style="left:865.80px;top:595.74px;font-size:9.4px;line-height:9.4px;color:#111;font-weight:700;transform:scaleX(1.2494);transform-origin:left;">Ambiente de Homologação</div>
<div class="a t" style="left:1077.60px;top:595.74px;font-size:9.4px;line-height:9.4px;color:#111;font-weight:700;transform:scaleX(1.2771);transform-origin:left;">Versão XML: 4.00</div>
<div class="a t" style="right:559.80px;top:595.74px;font-size:9.4px;line-height:9.4px;color:#111;font-weight:700;transform:scaleX(1.2904);transform-origin:right;">Versão XSLT: 1.11</div>
<div class="a" style="left:0px;top:922px;width:1919px;height:15px;background:#3a5e38"></div>
<div class="a t" style="left:1869.50px;top:924.07px;font-size:11.5px;line-height:11.5px;color:#fff;transform:scaleX(0.9838);transform-origin:left;">© NDD</div>
</body></html>
